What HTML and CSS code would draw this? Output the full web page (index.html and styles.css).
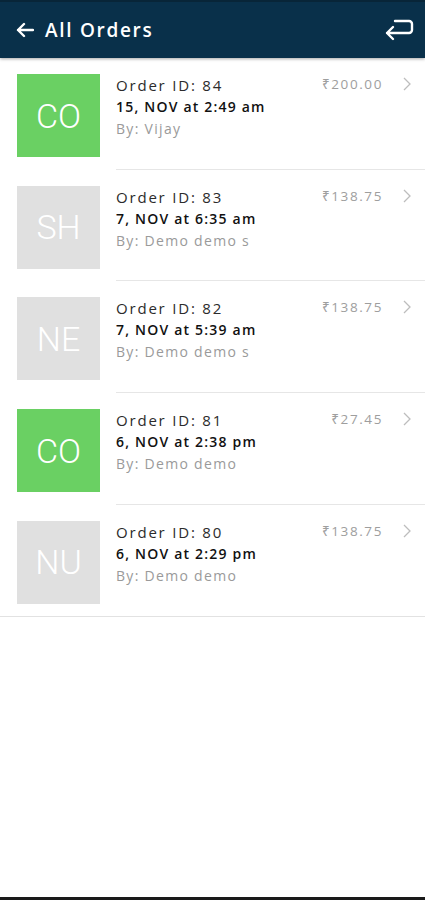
FILE: index.html
```html
<!DOCTYPE html>
<html>
<head>
<meta charset="utf-8">
<link rel="stylesheet" href="styles.css">
</head>
<body>
<div class="app">
  <header class="topbar">
    <div class="title-wrap">
      <svg class="back" width="18" height="16" viewBox="0 0 18 16"><path d="M17 8H2M8 2L2 8l6 6" fill="none" stroke="#fff" stroke-width="2.4" stroke-linecap="round" stroke-linejoin="round"/></svg>
      <span class="title">All Orders</span>
    </div>
    <svg class="ret" width="30" height="24" viewBox="0 0 30 24"><path d="M11 2h14a3 3 0 0 1 3 3v6a3 3 0 0 1-3 3H3M9 8l-6 6 6 6" fill="none" stroke="#fff" stroke-width="2.4" stroke-linecap="round" stroke-linejoin="round"/></svg>
  </header>
  <ul class="list">
    <li class="row">
      <div class="tile green">CO</div>
      <div class="info">
        <div class="top"><span class="oid">Order ID: 84</span><span class="price">₹200.00</span><svg class="chev" width="8" height="14" viewBox="0 0 8 14"><path d="M1 1l6 6-6 6" fill="none" stroke="#bdbdbd" stroke-width="1.3"/></svg></div>
        <div class="date">15, NOV at 2:49 am</div>
        <div class="by">By: Vijay</div>
      </div>
    </li>
    <li class="row">
      <div class="tile grey">SH</div>
      <div class="info">
        <div class="top"><span class="oid">Order ID: 83</span><span class="price">₹138.75</span><svg class="chev" width="8" height="14" viewBox="0 0 8 14"><path d="M1 1l6 6-6 6" fill="none" stroke="#bdbdbd" stroke-width="1.3"/></svg></div>
        <div class="date">7, NOV at 6:35 am</div>
        <div class="by">By: Demo demo s</div>
      </div>
    </li>
    <li class="row">
      <div class="tile grey">NE</div>
      <div class="info">
        <div class="top"><span class="oid">Order ID: 82</span><span class="price">₹138.75</span><svg class="chev" width="8" height="14" viewBox="0 0 8 14"><path d="M1 1l6 6-6 6" fill="none" stroke="#bdbdbd" stroke-width="1.3"/></svg></div>
        <div class="date">7, NOV at 5:39 am</div>
        <div class="by">By: Demo demo s</div>
      </div>
    </li>
    <li class="row">
      <div class="tile green">CO</div>
      <div class="info">
        <div class="top"><span class="oid">Order ID: 81</span><span class="price">₹27.45</span><svg class="chev" width="8" height="14" viewBox="0 0 8 14"><path d="M1 1l6 6-6 6" fill="none" stroke="#bdbdbd" stroke-width="1.3"/></svg></div>
        <div class="date">6, NOV at 2:38 pm</div>
        <div class="by">By: Demo demo</div>
      </div>
    </li>
    <li class="row last">
      <div class="tile grey">NU</div>
      <div class="info">
        <div class="top"><span class="oid">Order ID: 80</span><span class="price">₹138.75</span><svg class="chev" width="8" height="14" viewBox="0 0 8 14"><path d="M1 1l6 6-6 6" fill="none" stroke="#bdbdbd" stroke-width="1.3"/></svg></div>
        <div class="date">6, NOV at 2:29 pm</div>
        <div class="by">By: Demo demo</div>
      </div>
    </li>
  </ul>
</div>
</body>
</html>
```
FILE: styles.css
```css
* { box-sizing: border-box; }
html, body { margin: 0; padding: 0; background: #fff; }
body { font-family: "Open Sans", "Noto Sans", sans-serif; }
.app {
  width: 425px;
  height: 900px;
  display: flex;
  flex-direction: column;
  border-bottom: 3px solid #1a1a1a;
  overflow: hidden;
}
.topbar {
  height: 58px;
  flex: none;
  background: #09304a;
  border-top: 2px solid #082538;
  display: flex;
  align-items: center;
  justify-content: space-between;
  padding: 0 11px 0 16px;
  box-shadow: 0 1px 3px rgba(0,0,0,0.35);
  position: relative;
  z-index: 1;
}
.title-wrap { display: flex; align-items: center; gap: 11px; }
.back { display: block; }
.title {
  color: #fff;
  font-size: 19px;
  font-weight: 600;
  letter-spacing: 1.7px;
}
.ret { display: block; margin-top: 2px; }
.list { list-style: none; margin: 0; padding: 0; }
.row {
  display: flex;
  align-items: flex-start;
  padding: 16px 0 0 17px;
}
.tile {
  width: 83px;
  height: 83px;
  flex: none;
  display: flex;
  align-items: center;
  justify-content: center;
  color: #fff;
  font-family: Roboto, sans-serif;
  font-size: 34px;
  font-weight: 300;
  margin-bottom: 12.7px;
}
.green { background: #6ad063; }
.grey { background: #e0e0e0; }
.info {
  flex: 1;
  margin-left: 16px;
  align-self: stretch;
  border-bottom: 1px solid #e6e6e6;
  padding-right: 14px;
}
.row.last { border-bottom: 1px solid #e2e2e2; }
.row.last .info { border-bottom: none; }
.top { display: flex; align-items: center; }
.oid {
  flex: 1;
  font-size: 15px;
  color: #2b2b2b;
  letter-spacing: 1.8px;
  line-height: 22px;
}
.price {
  font-size: 13.5px;
  color: #9e9e9e;
  letter-spacing: 1.6px;
  margin-top: -2px;
}
.chev { flex: none; display: block; margin-left: 20px; margin-top: -2px; }
.date {
  font-size: 14px;
  font-weight: 600;
  color: #111;
  letter-spacing: 1.2px;
  line-height: 22px;
}
.by {
  font-size: 14px;
  color: #9a9a9a;
  letter-spacing: 1.3px;
  line-height: 22px;
}
```
